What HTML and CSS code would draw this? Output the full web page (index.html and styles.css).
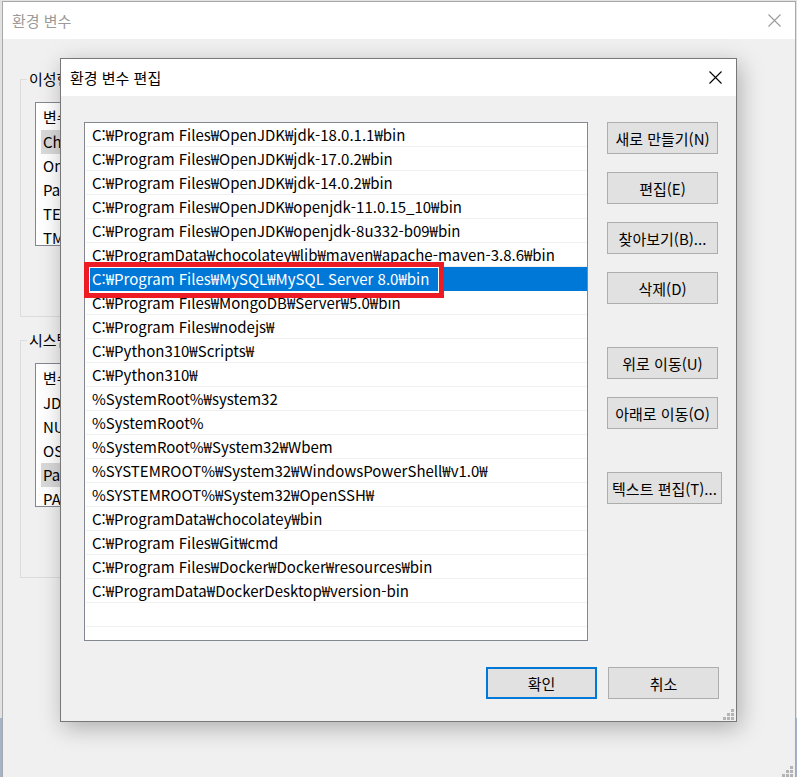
FILE: index.html
```html
<!DOCTYPE html>
<html lang="ko">
<head>
<meta charset="utf-8">
<title>환경 변수 편집</title>
<link rel="stylesheet" href="styles.css">
</head>
<body>
<div class="outer">
  <div class="titlebar">
    <span class="title">환경 변수</span>
    <svg class="close" width="13" height="13" viewBox="0 0 13 13"><path d="M0.5 0.5L12.5 12.5M12.5 0.5L0.5 12.5" stroke="#9a9a9a" stroke-width="1.1" fill="none"/></svg>
  </div>
  <div class="outer-body">
    <fieldset class="group">
      <legend>이성현에 대한 사용자 변수(U)</legend>
      <div class="vlist">
        <div class="vhead">변수</div>
        <div class="vrow sel">ChocolateyLastPathUpdate</div>
        <div class="vrow">OneDrive</div>
        <div class="vrow">Path</div>
        <div class="vrow">TEMP</div>
        <div class="vrow">TMP</div>
      </div>
    </fieldset>
    <fieldset class="group">
      <legend>시스템 변수(S)</legend>
      <div class="vlist">
        <div class="vhead">변수</div>
        <div class="vrow">JDK_HOME</div>
        <div class="vrow">NUMBER_OF_PROCESSORS</div>
        <div class="vrow">OS</div>
        <div class="vrow sel">Path</div>
        <div class="vrow">PATHEXT</div>
      </div>
    </fieldset>
  </div>
  <svg class="grip" width="12" height="12" viewBox="0 0 12 12"><g fill="#b4b4b4"><rect x="9" y="1" width="3" height="3"/><rect x="5" y="5" width="3" height="3"/><rect x="9" y="5" width="3" height="3"/><rect x="1" y="9" width="3" height="3"/><rect x="5" y="9" width="3" height="3"/><rect x="9" y="9" width="3" height="3"/></g></svg>
</div>

<div class="dialog">
  <div class="titlebar">
    <span class="title">환경 변수 편집</span>
    <svg class="close" width="13" height="13" viewBox="0 0 13 13"><path d="M0.5 0.5L12.5 12.5M12.5 0.5L0.5 12.5" stroke="#000" stroke-width="1.1" fill="none"/></svg>
  </div>
  <div class="dlg-body">
    <div class="main">
      <div class="pathlist">
        <div class="prow">C:₩Program Files₩OpenJDK₩jdk-18.0.1.1₩bin</div>
        <div class="prow">C:₩Program Files₩OpenJDK₩jdk-17.0.2₩bin</div>
        <div class="prow">C:₩Program Files₩OpenJDK₩jdk-14.0.2₩bin</div>
        <div class="prow">C:₩Program Files₩OpenJDK₩openjdk-11.0.15_10₩bin</div>
        <div class="prow">C:₩Program Files₩OpenJDK₩openjdk-8u332-b09₩bin</div>
        <div class="prow">C:₩ProgramData₩chocolatey₩lib₩maven₩apache-maven-3.8.6₩bin</div>
        <div class="prow sel">C:₩Program Files₩MySQL₩MySQL Server 8.0₩bin</div>
        <div class="prow">C:₩Program Files₩MongoDB₩Server₩5.0₩bin</div>
        <div class="prow">C:₩Program Files₩nodejs₩</div>
        <div class="prow">C:₩Python310₩Scripts₩</div>
        <div class="prow">C:₩Python310₩</div>
        <div class="prow">%SystemRoot%₩system32</div>
        <div class="prow">%SystemRoot%</div>
        <div class="prow">%SystemRoot%₩System32₩Wbem</div>
        <div class="prow">%SYSTEMROOT%₩System32₩WindowsPowerShell₩v1.0₩</div>
        <div class="prow">%SYSTEMROOT%₩System32₩OpenSSH₩</div>
        <div class="prow">C:₩ProgramData₩chocolatey₩bin</div>
        <div class="prow">C:₩Program Files₩Git₩cmd</div>
        <div class="prow">C:₩Program Files₩Docker₩Docker₩resources₩bin</div>
        <div class="prow">C:₩ProgramData₩DockerDesktop₩version-bin</div>
        <div class="prow"></div>
        <div class="mark"></div>
      </div>
      <div class="side">
        <button class="btn">새로 만들기(N)</button>
        <button class="btn">편집(E)</button>
        <button class="btn">찾아보기(B)...</button>
        <button class="btn">삭제(D)</button>
        <button class="btn gap">위로 이동(U)</button>
        <button class="btn">아래로 이동(O)</button>
        <button class="btn gap wide">텍스트 편집(T)...</button>
      </div>
    </div>
    <div class="footer">
      <button class="btn default">확인</button>
      <button class="btn">취소</button>
    </div>
  </div>
  <svg class="grip" width="12" height="12" viewBox="0 0 12 12"><g fill="#b4b4b4"><rect x="9" y="1" width="3" height="3"/><rect x="5" y="5" width="3" height="3"/><rect x="9" y="5" width="3" height="3"/><rect x="1" y="9" width="3" height="3"/><rect x="5" y="9" width="3" height="3"/><rect x="9" y="9" width="3" height="3"/></g></svg>
</div>
</body>
</html>
```

FILE: styles.css
```css
* { box-sizing: border-box; }

html, body {
  margin: 0;
  height: 777px;
  overflow: hidden;
}

body {
  position: relative;
  font-family: "Noto Sans CJK KR", "Noto Sans", sans-serif;
  font-size: 15px;
  color: #000;
  background: linear-gradient(#e2e2e2 0, #e2e2e2 718px, #a3b3c9 718px);
}

/* ---------- background window ---------- */
.outer {
  position: absolute;
  left: 2px;
  top: 1px;
  width: 794px;
  height: 778px;
  border: 1px solid #a8a8a8;
  background: #f0f0f0;
}

.titlebar {
  display: flex;
  align-items: center;
  justify-content: space-between;
  height: 37px;
  background: #fff;
  padding: 0 14px 0 9px;
}

.outer .titlebar { color: #9a9a9a; }

.close { display: block; }

.outer-body {
  padding: 30px 0 0 17px;
  display: flex;
  flex-direction: column;
  gap: 13px;
}

.group {
  margin: 0;
  padding: 0;
  width: 700px;
  height: 248px;
  border: 1px solid #dcdcdc;
  min-width: 0;
}

.group legend {
  margin-left: 6px;
  padding: 0 2px;
  line-height: 20px;
}

.vlist {
  margin: 13px 0 0 14px;
  width: 640px;
  height: 144px;
  border: 1px solid #828790;
  background: #fff;
  overflow: hidden;
}

.vhead {
  height: 27px;
  line-height: 27px;
  padding-left: 7px;
}

.vrow {
  height: 24px;
  line-height: 24px;
  margin-left: 5px;
  padding-left: 2px;
  white-space: nowrap;
}

.vrow.sel { background: #d9d9d9; }

.grip {
  position: absolute;
  right: 2px;
  bottom: 1px;
}

/* ---------- edit dialog ---------- */
.dialog {
  position: absolute;
  left: 60px;
  top: 58px;
  width: 677px;
  height: 664px;
  border: 1px solid #777;
  background: #f0f0f0;
  box-shadow: 3px 6px 22px rgba(0, 0, 0, 0.28);
  display: flex;
  flex-direction: column;
}

.dlg-body {
  flex: 1;
  display: flex;
  flex-direction: column;
  padding: 26px 14px 22px 23px;
}

.main {
  display: flex;
  gap: 19px;
}

.pathlist {
  position: relative;
  flex-shrink: 0;
  width: 504px;
  height: 519px;
  border: 1px solid #828790;
  background: #fff;
  padding-left: 1px;
}

.prow {
  height: 24px;
  line-height: 23px;
  border-bottom: 1px solid #f0f0f0;
  padding-left: 6px;
  white-space: nowrap;
}

.prow.sel {
  background: #0078d7;
  border-bottom-color: #0078d7;
  color: #fff;
}

.mark {
  position: absolute;
  left: -1px;
  top: 139px;
  width: 360px;
  height: 36px;
  border: 5px solid #ed1c24;
  box-shadow: inset 0 0 0 1px #fff;
}

.side {
  flex-shrink: 0;
  display: flex;
  flex-direction: column;
  align-items: flex-start;
}

.btn {
  width: 111px;
  height: 32px;
  padding: 0;
  border: 1px solid #adadad;
  background: #e1e1e1;
  font: inherit;
  color: #000;
  text-align: center;
  white-space: nowrap;
}

.side .btn + .btn { margin-top: 18px; }
.side .btn.gap { margin-top: 43px; }
.btn.wide { width: 115px; }

.footer {
  margin-top: auto;
  margin-right: 3px;
  display: flex;
  justify-content: flex-end;
  gap: 11px;
}

.btn.default { border: 2px solid #0078d7; }
```
